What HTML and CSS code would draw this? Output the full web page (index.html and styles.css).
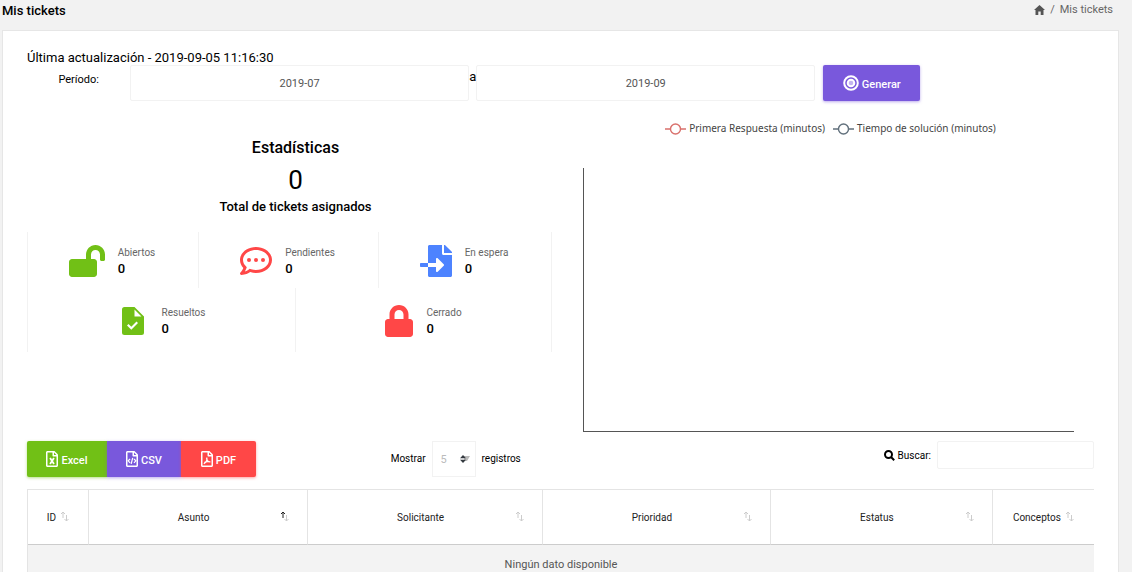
FILE: index.html
```html
<!DOCTYPE html>
<html lang="es">
<head>
<meta charset="utf-8">
<title>Mis tickets</title>
<link rel="stylesheet" href="styles.css">
</head>
<body>
<svg class="defs" aria-hidden="true">
  <symbol id="sort" viewBox="0 0 9 11"><path class="up" d="M3 7V1M1 3l2-2 2 2"/><path class="down" d="M6.500 4v6M4.500 8l2 2 2-2"/></symbol>
  <symbol id="file" viewBox="0 0 384 512"><path d="M369.900 97.900L286 14C277 5 264.800 0 252.100 0H48C21.500 0 0 21.500 0 48v416c0 26.500 21.500 48 48 48h288c26.500 0 48-21.500 48-48V131.900c0-12.700-5.100-25-14.100-34zM332.100 128H256V51.900l76.100 76.100zM48 464V48h160v104c0 13.300 10.700 24 24 24h104v288H48z"/></symbol>
</svg>
<div class="page">
  <header class="topbar">
    <h1 class="title">Mis tickets</h1>
    <nav class="crumbs" aria-label="Ruta">
      <a href="#" aria-label="Inicio"><svg class="home" viewBox="0 0 11 10"><path d="M5.500 0L11 5H9.500v5H6.700V6.500H4.300V10H1.500V5H0z"/></svg></a>
      <span>/</span>
      <span class="here">Mis tickets</span>
    </nav>
  </header>
  <main class="card">
    <p class="updated">Última actualización - 2019-09-05 11:16:30</p>
    <form class="period">
      <label class="period-label" for="from">Período:</label>
      <input class="field" id="from" type="text" value="2019-07">
      <label class="to" for="until">a</label>
      <input class="field" id="until" type="text" value="2019-09">
      <button class="btn generate" type="button"><svg class="target" viewBox="0 0 16 16"><circle cx="8" cy="8" r="6.800"/><circle cx="8" cy="8" r="3.300"/></svg><span>Generar</span></button>
    </form>

    <div class="overview">
      <section class="stats">
        <h2 class="stats-title">Estadísticas</h2>
        <p class="total">0</p>
        <h3 class="total-label">Total de tickets asignados</h3>
        <div class="tiles tiles-three">
          <div class="tile"><svg class="open" viewBox="0 0 576 512"><path d="M423.500 0C339.500.300 272 69.500 272 153.500V224H48c-26.500 0-48 21.500-48 48v192c0 26.500 21.500 48 48 48h352c26.500 0 48-21.500 48-48V272c0-26.500-21.500-48-48-48h-48v-71.100c0-39.600 31.700-72.500 71.300-72.900 40-.400 72.700 32.100 72.700 72v80c0 13.300 10.700 24 24 24h32c13.300 0 24-10.700 24-24v-80C576 68 507.500-.300 423.500 0z"/></svg>
            <p><span class="name">Abiertos</span><b class="count">0</b></p></div>
          <div class="tile"><svg class="pending" viewBox="0 0 512 512"><path d="M256 32C114.600 32 0 125.100 0 240c0 47.600 19.900 91.200 52.900 126.300C38 405.700 7 439.100 6.500 439.500c-6.600 7-8.400 17.200-4.600 26S14.400 480 24 480c61.500 0 110-25.700 139.100-46.300C192 442.800 223.200 448 256 448c141.400 0 256-93.100 256-208S397.400 32 256 32zm0 368c-26.700 0-53.100-4.100-78.400-12.100l-22.700-7.200-19.500 13.800c-14.300 10.100-33.900 21.400-57.500 29 7.300-12.100 14.400-25.700 19.900-40.200l10.600-28.100-20.600-21.800C69.700 314.100 48 282.200 48 240c0-88.200 93.300-160 208-160s208 71.800 208 160-93.300 160-208 160z"/><circle cx="144" cy="240" r="32"/><circle cx="256" cy="240" r="32"/><circle cx="368" cy="240" r="32"/></svg>
            <p><span class="name">Pendientes</span><b class="count">0</b></p></div>
          <div class="tile"><svg class="waiting" viewBox="0 0 512 512"><path d="M16 288c-8.800 0-16 7.200-16 16v32c0 8.800 7.200 16 16 16h112v-64zm489-183L407.100 7c-4.500-4.500-10.600-7-17-7H384v128h128v-6.100c0-6.300-2.500-12.400-7-16.900zm-153 31V0H152c-13.300 0-24 10.700-24 24v264h128v-65.200c0-14.300 17.300-21.400 27.400-11.300L379 308c6.600 6.700 6.600 17.400 0 24l-95.700 96.400c-10.100 10.100-27.400 3-27.400-11.300V352H128v136c0 13.300 10.700 24 24 24h336c13.300 0 24-10.700 24-24V160H376c-13.200 0-24-10.800-24-24z"/></svg>
            <p><span class="name">En espera</span><b class="count">0</b></p></div>
        </div>
        <div class="tiles tiles-two">
          <div class="tile"><svg class="solved" viewBox="0 0 22 28"><path fill-rule="evenodd" d="M2.500 0H12.500L22 9.500V25.500Q22 28 19.500 28H2.500Q0 28 0 25.500V2.500Q0 0 2.500 0zM12.500 2.500V9.500H19.500zM6.500 17L5 18.500 9.300 22.700 16 16 14.500 14.500 9.300 19.700z"/></svg>
            <p><span class="name">Resueltos</span><b class="count">0</b></p></div>
          <div class="tile"><svg class="closed" viewBox="0 0 448 512"><path d="M400 224h-24v-72C376 68.200 307.800 0 224 0S72 68.200 72 152v72H48c-26.500 0-48 21.500-48 48v192c0 26.500 21.500 48 48 48h352c26.500 0 48-21.500 48-48V272c0-26.500-21.500-48-48-48zm-104 0H152v-72c0-39.700 32.300-72 72-72s72 32.300 72 72v72z"/></svg>
            <p><span class="name">Cerrado</span><b class="count">0</b></p></div>
        </div>
      </section>
      <section class="chart" aria-label="Tiempos de atención">
        <div class="legend">
          <span class="key key-first"><svg viewBox="0 0 21 12"><path d="M0 6h5M16 6h5"/><circle cx="10.500" cy="6" r="5"/></svg><span>Primera Respuesta (minutos)</span></span>
          <span class="key key-time"><svg viewBox="0 0 21 12"><path d="M0 6h5M16 6h5"/><circle cx="10.500" cy="6" r="5"/></svg><span>Tiempo de solución (minutos)</span></span>
        </div>
        <div class="plot"></div>
      </section>
    </div>

    <div class="tools">
      <div class="exports">
        <button class="btn excel" type="button"><svg class="doc" viewBox="0 0 384 512"><use href="#file"/><path class="mark bold" d="M130 225l125 190M255 225L130 415"/></svg><span>Excel</span></button>
        <button class="btn csv" type="button"><svg class="doc" viewBox="0 0 384 512"><use href="#file"/><path class="mark" d="M130 250l-60 65 60 65M255 250l60 65-60 65M215 220l-50 195"/></svg><span>CSV</span></button>
        <button class="btn pdf" type="button"><svg class="doc" viewBox="0 0 384 512"><use href="#file"/><path class="mark" d="M180 205c25 60-15 150-90 205M180 230c10 80 50 125 120 120M105 370c60-35 120-40 195-20"/></svg><span>PDF</span></button>
      </div>
      <label class="length" for="rows">Mostrar
        <span class="select-box">
          <select id="rows"><option>5</option><option>10</option><option>25</option></select>
          <svg class="arrows" viewBox="0 0 10 8"><path class="shade" d="M4 1h6L7 6H4z"/><path d="M0 3.300L3 0l3 3.300zM0 4.700h6L3 8z"/></svg>
        </span>
        registros</label>
      <div class="search">
        <label for="search"><svg class="lens" viewBox="0 0 11 11"><circle cx="4.500" cy="4.500" r="3.500"/><path d="M7 7l3.200 3.200"/></svg>Buscar:</label>
        <input class="field" id="search" type="search">
      </div>
    </div>

    <table class="tickets">
      <colgroup><col class="c-id"><col class="c-subject"><col class="c-applicant"><col class="c-priority"><col class="c-status"><col class="c-concepts"></colgroup>
      <thead>
        <tr>
          <th scope="col"><div class="head tight"><span>ID</span><svg class="sort"><use href="#sort"/></svg></div></th>
          <th scope="col"><div class="head"><span>Asunto</span><svg class="sort asc"><use href="#sort"/></svg></div></th>
          <th scope="col"><div class="head"><span>Solicitante</span><svg class="sort"><use href="#sort"/></svg></div></th>
          <th scope="col"><div class="head"><span>Prioridad</span><svg class="sort"><use href="#sort"/></svg></div></th>
          <th scope="col"><div class="head"><span>Estatus</span><svg class="sort"><use href="#sort"/></svg></div></th>
          <th scope="col"><div class="head tight"><span>Conceptos</span><svg class="sort"><use href="#sort"/></svg></div></th>
        </tr>
      </thead>
      <tbody>
        <tr><td colspan="6">Ningún dato disponible</td></tr>
      </tbody>
    </table>
  </main>
</div>
</body>
</html>
```
FILE: styles.css
```css
* { box-sizing: border-box; }
body { margin: 0; background: #f2f2f2; color: #000; font: 13px/20px Roboto, "Liberation Sans", sans-serif; }
h1, h2, h3, p { margin: 0; font-weight: 500; }
svg { display: block; flex: none; }
input, select, button { font-family: inherit; }
.defs { position: absolute; width: 0; height: 0; }
.page { height: 100vh; overflow: hidden; }

.topbar { display: flex; justify-content: space-between; height: 30px; padding: 0 19px 0 2px; }
.title { font-size: 13px; line-height: 21px; }
.crumbs { display: flex; align-items: center; gap: 5px; height: 19px; font-size: 11px; color: #666; }
.crumbs a { color: #555; }
.home { width: 11px; height: 10px; fill: currentColor; }

.card { margin: 0 13px 0 2px; padding: 19px 24px 24px; background: #fff; border: 1px solid #e6e6e6; }
.updated { font-weight: 400; line-height: 15px; }

.field { min-width: 0; border: 1px solid #f2f2f2; border-radius: 2px; background: #fff; color: #555; font-size: 11px; outline: none; }
.period { display: flex; align-items: flex-start; width: 84%; padding-right: 3px; }
.period-label { width: 103px; padding-right: 31px; text-align: right; font-size: 11px; line-height: 29px; }
.period .field { flex: 1; height: 36px; text-align: center; }
.to { width: 7px; line-height: 24px; }
.btn { display: inline-flex; align-items: center; justify-content: center; gap: 3px; height: 36px; padding: 0; border: 0; color: #fff; font-size: 11px; font-weight: 500; line-height: 16px; cursor: pointer; }
.btn span { padding-top: 4px; }
.generate { width: 97px; margin-left: 8px; border-radius: 2px; background: #7958dc; box-shadow: 0 1px 3px #7958dc80; }
.target { width: 16px; height: 16px; fill: none; stroke: #fff; stroke-width: 2; }
.target circle:last-child { fill: #c4b6f0; }

.overview { display: grid; grid-template-columns: 537fr 530fr; }
.stats { padding-top: 35px; text-align: center; }
.stats-title { font-size: 16px; line-height: 24px; }
.total { font-size: 26px; font-weight: 400; line-height: 40px; }
.total-label { font-size: 13px; line-height: 14px; }
.tiles { display: grid; margin-right: 12px; border-right: 1px solid #f2f2f2; text-align: left; }
.tiles-three { grid-template-columns: 171fr 180fr 173fr; margin-top: 18px; }
.tiles-two { grid-template-columns: 268fr 256fr; }
.tile { display: flex; align-items: center; justify-content: center; gap: 13px; height: 56px; padding: 2px 2px 0 0; border-left: 1px solid #f2f2f2; }
.tiles-two .tile { height: 64px; padding-right: 0; }
.name, .count { display: block; line-height: 16px; }
.name { font-size: 10px; font-weight: 400; color: #666; }
.count { font-size: 13px; font-weight: 500; }
.open { width: 36px; height: 32px; fill: #71c016; }
.pending { width: 32px; height: 32px; fill: #ff4747; }
.waiting { width: 32px; height: 32px; fill: #4d83ff; }
.solved { width: 22px; height: 28px; margin: 0 5px 0 4px; fill: #71c016; }
.closed { width: 28px; height: 32px; fill: #ff4747; }

.chart { padding: 20px 20px 0 19px; }
.legend { display: flex; justify-content: center; gap: 8px; margin-bottom: 32px; padding-left: 4px; font: 10px/15px "Noto Sans", "Open Sans", sans-serif; }
.key { display: flex; align-items: center; gap: 3px; white-space: nowrap; }
.key span { color: #444; }
.key svg { width: 21px; height: 12px; fill: #fff; stroke: currentColor; stroke-width: 1.400; }
.key-first { color: #d9706c; }
.key-time { color: #61707c; }
.plot { height: 264px; border: solid #555; border-width: 0 0 1px 1px; }

.tools { display: grid; grid-template-columns: 1fr 1fr 1fr; margin-top: 9px; }
.exports { display: flex; }
.excel { width: 80px; border-radius: 2px 0 0 2px; background: #71c016; box-shadow: 0 1px 3px #71c01680; }
.csv { width: 74px; background: #7958dc; box-shadow: 0 1px 3px #7958dc80; }
.pdf { width: 75px; border-radius: 0 2px 2px 0; background: #ff4747; box-shadow: 0 1px 3px #ff474780; }
.doc { width: 12px; height: 16px; fill: #fff; }
.mark { fill: none; stroke: #fff; stroke-width: 40; }
.bold { stroke-width: 58; }
.length { display: flex; align-items: center; gap: 6px; padding-left: 8px; font-size: 10px; }
.select-box { position: relative; }
.select-box select { display: block; width: 44px; height: 36px; padding: 0 8px; border: 1px solid #f2f2f2; background: #fff; color: #bbb; font-size: 11px; appearance: none; outline: none; }
.arrows { position: absolute; right: 6px; top: 14px; width: 10px; height: 8px; fill: #343a40; pointer-events: none; }
.shade { fill: #bbb; }
.search { display: flex; justify-content: flex-end; align-items: flex-start; gap: 6px; font-size: 10px; line-height: 29px; }
.search label { display: flex; align-items: center; gap: 3px; }
.lens { width: 11px; height: 11px; fill: none; stroke: #000; stroke-width: 2; }
.search .field { width: 157px; height: 28px; }

.tickets { width: 100%; margin-top: 12px; table-layout: fixed; border-collapse: separate; border-spacing: 0; border-left: 1px solid #e4e4e4; }
.c-id { width: 5.700%; }
.c-subject { width: 20.600%; }
.c-applicant { width: 22%; }
.c-priority { width: 21.400%; }
.c-status { width: 20.800%; }
.c-concepts { width: 9.500%; }
.tickets th { height: 56px; padding: 2px 18px 0; border: solid #e4e4e4; border-width: 1px 1px 1px 0; border-bottom-color: #ccc; font-size: 10px; font-weight: 400; color: #222; }
.tickets th:last-child { border-right: 0; }
.head { display: flex; align-items: center; justify-content: center; }
.head span { flex: 1; }
.head.tight { gap: 4px; }
.head.tight span { flex: none; }
.sort { width: 9px; height: 11px; margin-bottom: 3px; fill: none; stroke: #ccc; }
.asc { --up: #222; }
.up { stroke: var(--up, #ccc); }
.tickets td { height: 40px; padding: 0; background: #f3f3f3; text-align: center; font-size: 11px; color: #555; }
```
